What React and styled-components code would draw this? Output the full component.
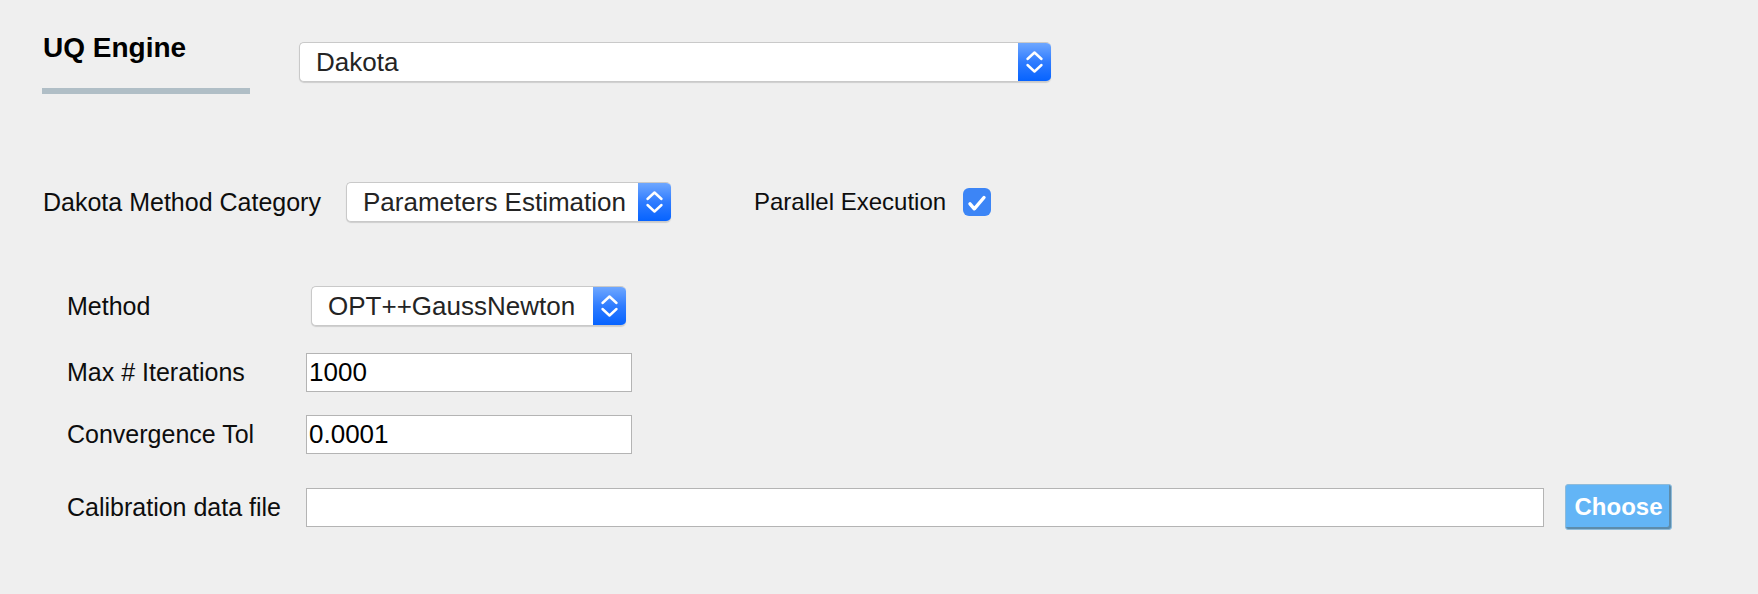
import React from "react";
import styled, { createGlobalStyle } from "styled-components";

const Global = createGlobalStyle`
  html, body {
    margin: 0;
    padding: 0;
    background: #efefef;
  }
  body {
    font-family: "Liberation Sans", Arial, sans-serif;
    color: #000;
  }
`;

const Page = styled.div`
  padding: 32px 0 0 42px;
  min-height: 562px;
  background: #efefef;
`;

const Header = styled.div`
  display: flex;
  align-items: flex-start;
`;

const TitleBlock = styled.div`
  display: flex;
  flex-direction: column;
  width: 208px;
`;

const Title = styled.div`
  font-size: 28px;
  font-weight: 700;
  line-height: 32px;
  padding-left: 1px;
  color: #000;
`;

const TitleBar = styled.div`
  margin-top: 24px;
  height: 6px;
  background: #b0bec6;
`;

const Combo = styled.div`
  display: flex;
  align-items: stretch;
  box-sizing: border-box;
  width: ${(p) => p.$width}px;
  height: 40px;
  margin-top: ${(p) => p.$mt || 0}px;
  margin-left: ${(p) => p.$ml || 0}px;
  background: #fff;
  border: 1px solid #c9c9c9;
  border-right: none;
  border-radius: 5px;
  box-shadow: 0 1px 1px rgba(0, 0, 0, 0.14);
  overflow: hidden;
`;

const ComboText = styled.div`
  flex: 1;
  display: flex;
  align-items: center;
  padding-left: 16px;
  font-size: 26px;
  color: #242424;
  white-space: nowrap;
  overflow: hidden;
`;

const ComboArrows = styled.div`
  width: 33px;
  display: flex;
  align-items: center;
  justify-content: center;
  background: linear-gradient(to bottom, #6ea7ff 0%, #2f7cff 50%, #0663ff 100%);
`;

const Chevrons = () => (
  <svg width="33" height="40" viewBox="0 0 33 40">
    <path
      d="M9.5 17 L16.5 10.5 L23.5 17"
      fill="none"
      stroke="#fff"
      strokeWidth="2.4"
      strokeLinecap="round"
      strokeLinejoin="round"
    />
    <path
      d="M9.5 23 L16.5 29.5 L23.5 23"
      fill="none"
      stroke="#fff"
      strokeWidth="2.4"
      strokeLinecap="round"
      strokeLinejoin="round"
    />
  </svg>
);

const Select = ({ value, width, mt, ml }) => (
  <Combo $width={width} $mt={mt} $ml={ml}>
    <ComboText>{value}</ComboText>
    <ComboArrows>
      <Chevrons />
    </ComboArrows>
  </Combo>
);

const CategoryRow = styled.div`
  display: flex;
  align-items: center;
  margin-top: 88px;
  height: 40px;
`;

const Label = styled.span`
  font-size: 25px;
  color: #0d0d0d;
  white-space: nowrap;
  padding-left: 1px;
`;

const CategoryLabel = styled(Label)`
  width: 303px;
`;

const ParallelLabel = styled(Label)`
  margin-left: 82px;
  font-size: 24px;
`;

const CheckBox = styled.span`
  display: inline-flex;
  align-items: center;
  justify-content: center;
  width: 28px;
  height: 28px;
  margin-left: 17px;
  border-radius: 6px;
  background: #3c85f6;
`;

const Form = styled.div`
  margin-top: 64px;
  padding-left: 24px;
  display: flex;
  flex-direction: column;
`;

const FormRow = styled.div`
  display: flex;
  align-items: center;
  margin-top: ${(p) => p.$mt || 0}px;
`;

const FormLabel = styled(Label)`
  width: 239px;
  flex: none;
`;

const TextInput = styled.input`
  box-sizing: border-box;
  width: ${(p) => p.$width}px;
  height: 39px;
  margin: 0;
  padding: 0 0 0 2px;
  border: 1px solid #b4b4b4;
  background: #fff;
  font-family: "Liberation Sans", Arial, sans-serif;
  font-size: 26px;
  color: #000;
  outline: none;
`;

const ChooseButton = styled.button`
  box-sizing: border-box;
  width: 107px;
  height: 46px;
  margin-left: 21px;
  padding: 0;
  border: 1px solid #8fbbd9;
  border-radius: 3px;
  background: #63b5f6;
  box-shadow: inset -2px -2px 0 #5d8cab;
  color: #fff;
  font-family: "Liberation Sans", Arial, sans-serif;
  font-weight: 700;
  font-size: 24px;
  cursor: pointer;
`;

export default function App() {
  return (
    <>
      <Global />
      <Page>
        <Header>
          <TitleBlock>
            <Title>UQ Engine</Title>
            <TitleBar />
          </TitleBlock>
          <Select value="Dakota" width={752} mt={10} ml={49} />
        </Header>

        <CategoryRow>
          <CategoryLabel>Dakota Method Category</CategoryLabel>
          <Select value="Parameters Estimation" width={325} />
          <ParallelLabel>Parallel Execution</ParallelLabel>
          <CheckBox>
            <svg width="28" height="28" viewBox="0 0 28 28">
              <path
                d="M7 15.8 L11.3 20.8 L21 9.5"
                fill="none"
                stroke="#fff"
                strokeWidth="3.4"
                strokeLinecap="round"
                strokeLinejoin="round"
              />
            </svg>
          </CheckBox>
        </CategoryRow>

        <Form>
          <FormRow>
            <FormLabel>Method</FormLabel>
            <Select value="OPT++GaussNewton" width={315} ml={5} />
          </FormRow>
          <FormRow $mt={27}>
            <FormLabel>Max # Iterations</FormLabel>
            <TextInput $width={326} defaultValue="1000" />
          </FormRow>
          <FormRow $mt={23}>
            <FormLabel>Convergence Tol</FormLabel>
            <TextInput $width={326} defaultValue="0.0001" />
          </FormRow>
          <FormRow $mt={30}>
            <FormLabel>Calibration data file</FormLabel>
            <TextInput $width={1238} defaultValue="" />
            <ChooseButton>Choose</ChooseButton>
          </FormRow>
        </Form>
      </Page>
    </>
  );
}
